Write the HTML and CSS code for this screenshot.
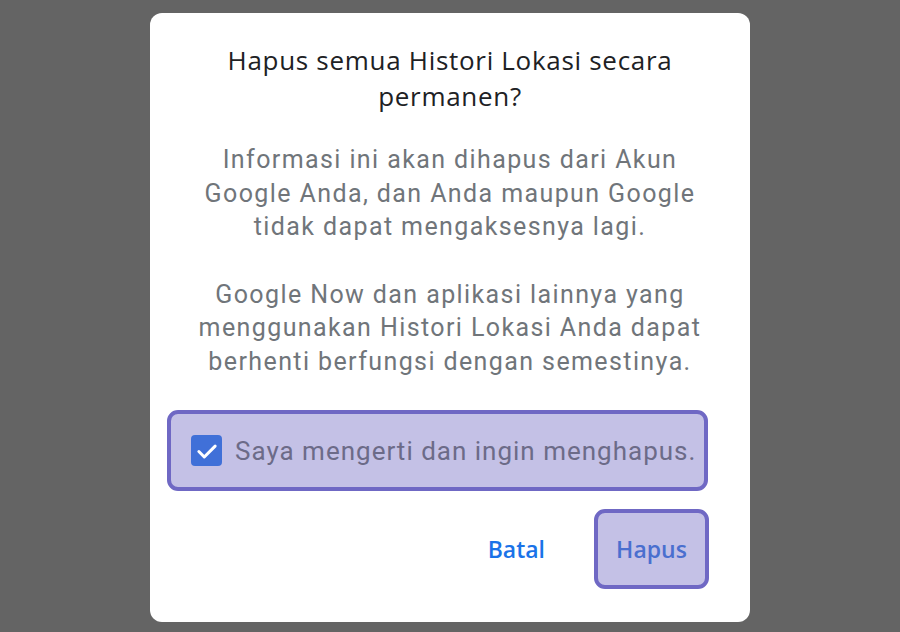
FILE: index.html
```html
<!DOCTYPE html>
<html lang="id">
<head>
    <meta charset="UTF-8">
    <meta name="viewport" content="width=device-width, initial-scale=1.0">
    <title>Hapus Histori Lokasi</title>
    <link rel="stylesheet" href="styles.css">
</head>
<body>
    <div class="dialog">
        <h1 class="dialog-title">Hapus semua Histori Lokasi secara<br>permanen?</h1>

        <p class="dialog-text">Informasi ini akan dihapus dari Akun<br>Google Anda, dan Anda maupun Google<br>tidak dapat mengaksesnya lagi.</p>
        <p class="dialog-text">Google Now dan aplikasi lainnya yang<br>menggunakan Histori Lokasi Anda dapat<br>berhenti berfungsi dengan semestinya.</p>

        <label class="confirm-row highlight">
            <span class="checkbox">
                <svg width="26" height="26" viewBox="0 0 24 24"><path d="M4.5 12.5l5 5 10-10" fill="none" stroke="#fff" stroke-width="2.8" stroke-linecap="round" stroke-linejoin="round"/></svg>
            </span>
            <span class="confirm-text">Saya mengerti dan ingin menghapus.</span>
        </label>

        <div class="button-row">
            <button class="text-btn">Batal</button>
            <button class="text-btn highlight">Hapus</button>
        </div>
    </div>
</body>
</html>
```

FILE: styles.css
```css
body {
    margin: 0;
    background-color: #646464;
    display: flex;
    justify-content: center;
    font-family: Roboto, "Noto Sans", sans-serif;
}

.dialog {
    width: 600px;
    height: 609px;
    margin-top: 13px;
    box-sizing: border-box;
    background-color: #fff;
    border-radius: 12px;
    padding: 29px 0 0;
    display: flex;
    flex-direction: column;
    align-items: center;
}

.dialog-title {
    margin: 0 0 29px;
    font-family: "Open Sans", Roboto, sans-serif;
    font-size: 26px;
    font-weight: 400;
    letter-spacing: 0.7px;
    line-height: 36px;
    color: #202124;
    text-align: center;
}

.dialog-text {
    margin: 0 0 34px;
    font-size: 25px;
    letter-spacing: 1.4px;
    line-height: 33.5px;
    color: #70757a;
    text-align: center;
}

.highlight {
    background-color: #c4c1e6;
    border: 4px solid #6f68c4;
    border-radius: 11px;
    box-sizing: border-box;
}

.confirm-row {
    align-self: flex-start;
    width: 541px;
    height: 81px;
    margin: -2px 0 0 17px;
    display: flex;
    align-items: center;
    gap: 13px;
    padding-left: 20px;
}

.checkbox {
    width: 31px;
    height: 31px;
    border-radius: 4px;
    background-color: #4070d8;
    display: flex;
    align-items: center;
    justify-content: center;
}

.confirm-text {
    font-size: 26px;
    letter-spacing: 1px;
    color: #6c6b88;
}

.button-row {
    align-self: stretch;
    display: flex;
    justify-content: flex-end;
    align-items: center;
    gap: 49px;
    margin-top: 18px;
    padding-right: 41px;
}

.text-btn {
    font-family: "Open Sans", Roboto, sans-serif;
    font-size: 23px;
    font-weight: 600;
    color: #1a73e8;
    background: none;
    border: none;
    padding: 0;
}

.text-btn.highlight {
    width: 115px;
    height: 80px;
    background-color: #c4c1e6;
    border: 4px solid #6f68c4;
    color: #4a6fcf;
}
```
